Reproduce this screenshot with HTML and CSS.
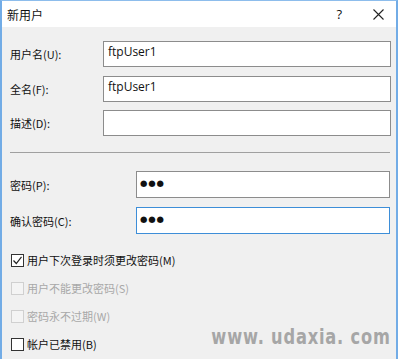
FILE: index.html
```html
<!DOCTYPE html>
<html>
<head>
<meta charset="utf-8">
<link rel="stylesheet" href="styles.css">
</head>
<body>
<div class="window">
  <div class="titlebar">
    <span class="title">新用户</span>
    <span class="help">?</span>
    <span class="close">
      <svg width="11" height="11" viewBox="0 0 11 11"><path d="M0.5 0.5 L10.5 10.5 M10.5 0.5 L0.5 10.5" stroke="#222" stroke-width="1.1" fill="none"/></svg>
    </span>
  </div>
  <div class="content">
    <div class="group top">
      <div class="row"><label class="lbl">用户名(U):</label><div class="input">ftpUser1</div></div>
      <div class="row"><label class="lbl">全名(F):</label><div class="input">ftpUser1</div></div>
      <div class="row"><label class="lbl">描述(D):</label><div class="input"></div></div>
    </div>
    <div class="sep"></div>
    <div class="group pw">
      <div class="row"><label class="lbl">密码(P):</label><div class="input dots">●●●</div></div>
      <div class="row"><label class="lbl">确认密码(C):</label><div class="input dots focus">●●●</div></div>
    </div>
    <div class="checks">
      <div class="check"><span class="box on"><svg width="11" height="11" viewBox="0 0 11 11"><path d="M1.5 5.5 L4.3 8.5 L9.5 1.8" stroke="#222" stroke-width="1.2" fill="none"/></svg></span><span>用户下次登录时须更改密码(M)</span></div>
      <div class="check disabled"><span class="box"></span><span>用户不能更改密码(S)</span></div>
      <div class="check disabled"><span class="box"></span><span>密码永不过期(W)</span></div>
      <div class="check"><span class="box"></span><span>帐户已禁用(B)</span></div>
    </div>
    <div class="watermark">www. udaxia. com</div>
  </div>
</div>
</body>
</html>
```
FILE: styles.css
```css
html, body {
  margin: 0;
  padding: 0;
  background: #fff;
}
body {
  width: 400px;
  height: 359px;
  overflow: hidden;
  font-family: "Open Sans", "Noto Sans CJK SC", sans-serif;
  font-size: 11px;
  color: #111;
}
.window {
  width: 394px;
  height: 358px;
  border-left: 2px solid #72acE6;
  border-right: 2px solid #72acE6;
  border-top: 1px solid #8dbdec;
  background: #f0f0f0;
  position: relative;
}
.titlebar {
  height: 26px;
  background: #fff;
  display: flex;
  align-items: center;
}
.title {
  margin-left: 5px;
  font-size: 12px;
  font-family: "Noto Sans CJK SC", sans-serif;
  color: #111;
}
.help {
  margin-left: auto;
  font-size: 13px;
  font-family: "Open Sans", sans-serif;
  margin-right: 31px;
}
.close {
  display: flex;
  margin-right: 12px;
}
.content {
  padding: 14px 5px 0 8px;
  position: relative;
  height: 317px;
}
.group {
  display: flex;
  flex-direction: column;
}
.top {
  gap: 8.5px;
}
.row {
  display: flex;
  align-items: center;
}
.lbl {
  font-family: "Noto Sans CJK SC", sans-serif;
  font-size: 11px;
}
.top .lbl {
  width: 93px;
}
.input {
  box-sizing: border-box;
  height: 26px;
  background: #fff;
  border: 1px solid #8c8c8c;
  font-family: "Open Sans", sans-serif;
  font-size: 12px;
  padding: 2px 4px;
  line-height: 16px;
  color: #111;
}
.top .input {
  width: 288px;
}
.sep {
  height: 1px;
  background: #a0a0a0;
  margin: 16px 0 18px 0;
  width: 380px;
}
.pw {
  gap: 9px;
}
.pw .lbl {
  width: 126px;
}
.pw .input {
  width: 254px;
  height: 27px;
}
.dots {
  font-family: "DejaVu Sans", sans-serif;
  font-size: 8.5px;
  letter-spacing: 0.8px;
  padding-top: 3px;
  padding-left: 3px;
}
.focus {
  border-color: #3d8ed8;
}
.checks {
  margin-top: 12px;
  display: flex;
  flex-direction: column;
}
.check {
  height: 28px;
  display: flex;
  align-items: center;
  gap: 3px;
  font-family: "Noto Sans CJK SC", sans-serif;
  font-size: 11px;
}
.box {
  box-sizing: border-box;
  width: 13px;
  height: 13px;
  border: 1px solid #333;
  background: #fff;
  margin-left: 1px;
  display: flex;
  align-items: center;
  justify-content: center;
}
.disabled {
  color: #a8a8a8;
}
.disabled .box {
  border-color: #d0d0d0;
  background: #f4f4f4;
}
.watermark {
  position: absolute;
  right: 5px;
  bottom: 9px;
  font-family: "DejaVu Sans Condensed", "DejaVu Sans", sans-serif;
  font-weight: bold;
  font-size: 22px;
  color: #a6a6a6;
  letter-spacing: 1px;
  transform: scaleX(0.82);
  transform-origin: right center;
}
```
